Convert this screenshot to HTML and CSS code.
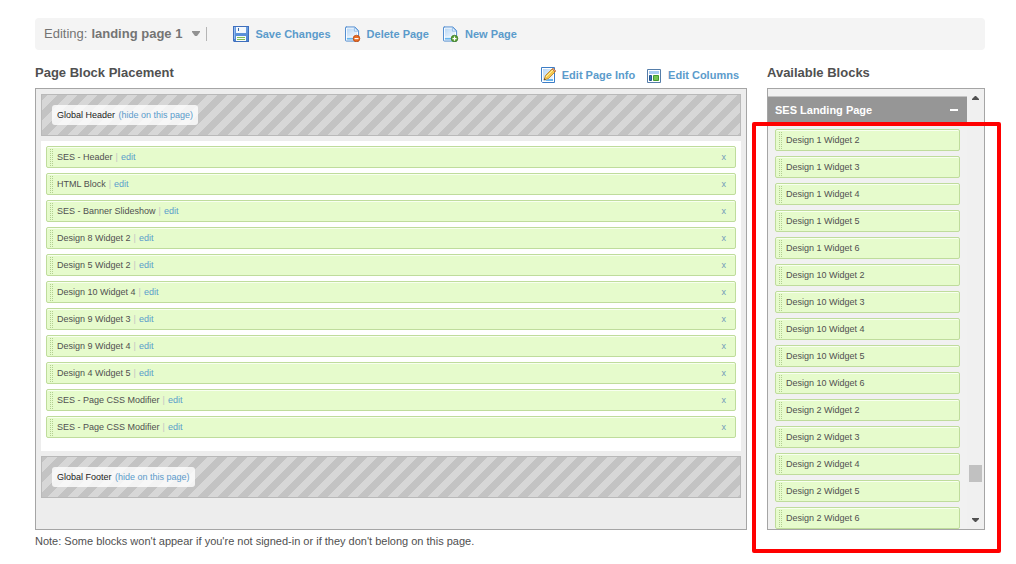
FILE: index.html
```html
<!DOCTYPE html>
<html lang="en">
<head>
<meta charset="utf-8">
<title>Page editor</title>
<link rel="stylesheet" href="styles.css">
</head>
<body>
<svg class="defs" aria-hidden="true">
  <defs>
    <linearGradient id="sheet" x1="0" y1="0" x2="1" y2="1"><stop offset="0" stop-color="#b9d8f6"/><stop offset="1" stop-color="#f2f8fe"/></linearGradient>
    <linearGradient id="disk" x1="0" y1="0" x2="0" y2="1"><stop offset="0" stop-color="#6b9fe0"/><stop offset="1" stop-color="#4a82d2"/></linearGradient>
    <symbol id="page" viewBox="0 0 16 16">
      <path d="M1 .5h9.500l4 4v11H1.500q-1 0-1-1V1.500q0-1 1-1z" fill="#fff" stroke="#4384cd"/>
      <path d="M2 2h8v3h3v6H2z" fill="url(#sheet)"/>
      <path d="M10 1v4h4z" fill="#e4f0fc" stroke="#6da5df" stroke-width=".7"/>
      <path d="M2 12h9v2H2z" fill="#68b5ee"/>
    </symbol>
  </defs>
</svg>
<header class="toolbar">
  <button class="page-picker" type="button">Editing: <strong>landing page 1</strong><svg class="caret" viewBox="0 0 8 6"><path d="M0 0h8v1L5 5H3L0 1z" fill="#929292"/></svg></button>
  <nav class="actions">
    <a class="action" href="#"><svg class="icon" viewBox="0 0 16 16"><path d="M0 0h16v16H1l-1-1z" fill="#3f6fbd"/><path d="M1 1h14v14H1z" fill="url(#disk)"/><path d="M3 1h10v6H3z" fill="#f3f8fd"/><path d="M5 2h1v3H5z" fill="#3b68aa"/><path d="M1 1h1v12H1z" fill="#91baf0"/><path d="M3 10h10v5H3z" fill="#f9fcf5"/><path d="M4 11h8v1H4zM4 13h8v1H4z" fill="#7cbd58"/></svg>Save Changes</a>
    <a class="action" href="#"><svg class="icon" viewBox="0 0 16 16"><use href="#page" width="15" height="16"/><circle cx="11.500" cy="12.500" r="3.300" fill="#e66a22" stroke="#b8430c" stroke-width=".7"/><path d="M9.500 12h4v1.200h-4z" fill="#fff"/></svg>Delete Page</a>
    <a class="action" href="#"><svg class="icon" viewBox="0 0 16 16"><use href="#page" width="15" height="16"/><circle cx="11.500" cy="12.500" r="3.300" fill="#5c9f34" stroke="#34751d" stroke-width=".7"/><path d="M9.500 12h1.400v-1.500h1.200V12h1.400v1.200h-1.400v1.500h-1.200v-1.500H9.500z" fill="#fff"/></svg>New Page</a>
  </nav>
</header>
<main class="workspace">
  <section class="placement">
    <div class="section-head">
      <h2 class="title">Page Block Placement</h2>
      <nav class="tools">
        <a class="action" href="#"><svg class="icon" viewBox="0 0 16 16"><path d="M.5.500h13v15H1.500l-1-1z" fill="#fff" stroke="#3c7dc6"/><path d="M2 2h10v12H2z" fill="url(#sheet)"/><path d="M7 12h5v2H4z" fill="#68b5ee"/><path d="M3 13l1.500-4.500L11 2l3 3-6.500 6.500z" fill="#f4c94f" stroke="#b27a26" stroke-width=".8"/><path d="M5 10l7-7" stroke="#fff0a0"/><path d="M11 2l1-1 3 3-1 1z" fill="#e9a26c" stroke="#a85a30" stroke-width=".5"/><path d="M3 13l.6-1.800L4.800 12.400z" fill="#333"/></svg>Edit Page Info</a>
        <a class="action" href="#"><svg class="icon" viewBox="0 0 16 16"><path d="M.5 2.500h13v13H.500z" fill="#fff" stroke="#557da9"/><path d="M2 4h10v3H2z" fill="#a9cdf3"/><path d="M2.500 8.500h2v5h-2z" fill="#3973b5" stroke="#235691"/><path d="M6.500 8.500h5v5h-5z" fill="#75c552" stroke="#439a34"/></svg>Edit Columns</a>
      </nav>
    </div>
    <div class="canvas">
      <div class="global"><span class="tag">Global Header <a href="#">(hide on this page)</a></span></div>
      <ul class="blocks column">
        <li class="block">SES - Header<i>|</i><a href="#">edit</a><button type="button" aria-label="Remove">x</button></li>
        <li class="block">HTML Block<i>|</i><a href="#">edit</a><button type="button" aria-label="Remove">x</button></li>
        <li class="block">SES - Banner Slideshow<i>|</i><a href="#">edit</a><button type="button" aria-label="Remove">x</button></li>
        <li class="block">Design 8 Widget 2<i>|</i><a href="#">edit</a><button type="button" aria-label="Remove">x</button></li>
        <li class="block">Design 5 Widget 2<i>|</i><a href="#">edit</a><button type="button" aria-label="Remove">x</button></li>
        <li class="block">Design 10 Widget 4<i>|</i><a href="#">edit</a><button type="button" aria-label="Remove">x</button></li>
        <li class="block">Design 9 Widget 3<i>|</i><a href="#">edit</a><button type="button" aria-label="Remove">x</button></li>
        <li class="block">Design 9 Widget 4<i>|</i><a href="#">edit</a><button type="button" aria-label="Remove">x</button></li>
        <li class="block">Design 4 Widget 5<i>|</i><a href="#">edit</a><button type="button" aria-label="Remove">x</button></li>
        <li class="block">SES - Page CSS Modifier<i>|</i><a href="#">edit</a><button type="button" aria-label="Remove">x</button></li>
        <li class="block">SES - Page CSS Modifier<i>|</i><a href="#">edit</a><button type="button" aria-label="Remove">x</button></li>
      </ul>
      <div class="global"><span class="tag">Global Footer <a href="#">(hide on this page)</a></span></div>
    </div>
    <p class="note">Note: Some blocks won't appear if you're not signed-in or if they don't belong on this page.</p>
  </section>
  <aside class="available">
    <div class="section-head"><h2 class="title">Available Blocks</h2></div>
    <div class="palette">
      <div class="palette-list">
        <button class="group" type="button">SES Landing Page<span class="minus"></span></button>
        <ul class="blocks">
          <li class="block">Design 1 Widget 2</li>
          <li class="block">Design 1 Widget 3</li>
          <li class="block">Design 1 Widget 4</li>
          <li class="block">Design 1 Widget 5</li>
          <li class="block">Design 1 Widget 6</li>
          <li class="block">Design 10 Widget 2</li>
          <li class="block">Design 10 Widget 3</li>
          <li class="block">Design 10 Widget 4</li>
          <li class="block">Design 10 Widget 5</li>
          <li class="block">Design 10 Widget 6</li>
          <li class="block">Design 2 Widget 2</li>
          <li class="block">Design 2 Widget 3</li>
          <li class="block">Design 2 Widget 4</li>
          <li class="block">Design 2 Widget 5</li>
          <li class="block">Design 2 Widget 6</li>
        </ul>
      </div>
      <div class="scrollbar">
        <svg class="arrow" viewBox="0 0 7 4"><path d="M3 0h1l3 3v1H0V3z" fill="#505050"/></svg>
        <span class="thumb"></span>
        <svg class="arrow" viewBox="0 0 7 4"><path d="M0 0h7v1L4 4H3L0 1z" fill="#505050"/></svg>
      </div>
    </div>
    <div class="highlight"></div>
  </aside>
</main>
</body>
</html>
```

FILE: styles.css
```css
* { box-sizing: border-box; }
body {
  min-height: 100vh;
  margin: 0;
  padding: 18px 31px 12px 35px;
  background: #fff;
  color: #505050;
  font-family: "Liberation Sans", Arial, sans-serif;
  font-size: 9px;
}
a { color: #5b9bcb; text-decoration: none; }
button { border: 0; padding: 0; background: none; font: inherit; color: inherit; cursor: pointer; }
ul { list-style: none; margin: 0; padding: 0; }
.defs { position: absolute; width: 0; height: 0; }

.toolbar {
  display: flex;
  align-items: center;
  height: 32px;
  padding-left: 9px;
  background: #f4f4f4;
  border-radius: 4px;
}
.page-picker {
  display: flex;
  align-items: center;
  gap: 4px;
  padding-right: 6px;
  border-right: 1px solid #b5b5b5;
  color: #747474;
  font-size: 13px;
  line-height: 14px;
}
.caret { width: 8px; height: 6px; margin-left: 6px; }
.actions { display: flex; gap: 14px; margin-left: 26px; }
.action {
  display: flex;
  align-items: center;
  gap: 6px;
  font-size: 11px;
  font-weight: bold;
  line-height: 16px;
}
.icon { width: 16px; height: 16px; flex: none; }

.workspace { display: grid; grid-template-columns: 1fr 218px; gap: 20px; }
.section-head {
  display: flex;
  align-items: flex-start;
  justify-content: space-between;
  height: 38px;
  padding-top: 15px;
}
.title { margin: 0; font-size: 13px; line-height: 16px; }
.tools { display: flex; gap: 12px; padding: 2px 8px 0 0; }
.tools .action { gap: 5px; }

.canvas {
  display: flex;
  flex-direction: column;
  gap: 5px;
  padding: 5px 5px 31px;
  border: 1px solid #a5a5a5;
  background: #ededed;
}
.global {
  height: 42px;
  padding: 10px;
  border: 1px solid #b9b9b9;
  background: linear-gradient(135deg, #d7d7d7 25%, #c3c3c3 25% 50%, #d7d7d7 50% 75%, #c3c3c3 75%) 6px 0 / 20px 20px;
}
.tag {
  display: inline-block;
  padding: 0 5px;
  border-radius: 3px;
  background: rgba(255, 255, 255, .8);
  color: #222;
  line-height: 20px;
}
.tag a { margin-left: 1px; }
.column { padding: 5px 5px 13px; background: #fff; }
.blocks { display: flex; flex-direction: column; gap: 5px; }
.block {
  display: flex;
  align-items: center;
  height: 22px;
  padding: 0 9px 0 3px;
  border: 1px solid #bfdc9c;
  border-radius: 2px;
  background: #e6fbcc;
  box-shadow: inset 0 1px #f8fff0;
}
.block::before {
  content: "";
  width: 3px;
  height: 17px;
  margin-right: 4px;
  background: conic-gradient(from 270deg, #a9c986 25%, transparent 0) 0 0 / 2px 2px;
  background: linear-gradient(#e6fbcc, #e6fbcc) 1px 0 / 1px 100% no-repeat, repeating-linear-gradient(#b2cf91 0 1px, #e6fbcc 1px 2px);
}
.block i { margin: 0 3px; color: #c5c5c5; font-style: normal; }
.block button { margin-left: auto; color: #7199b9; }
.note { margin: 4px 0 0; font-size: 11px; line-height: 14px; }

.available { position: relative; }
.palette {
  display: flex;
  height: 442px;
  border: 1px solid #a5a5a5;
  background: #f1f1f1;
  overflow: hidden;
}
.palette-list { flex: 1; padding-top: 7px; }
.group {
  display: flex;
  align-items: center;
  justify-content: space-between;
  width: 100%;
  height: 26px;
  padding: 0 9px 0 7px;
  border-top: 1px solid #c4c4c4;
  background: #969696;
  color: #fff;
  font-size: 11px;
  font-weight: bold;
}
.minus { width: 8px; height: 2px; background: #fff; }
.palette-list .blocks { padding: 7px 7px 0; }
.scrollbar {
  display: flex;
  flex-direction: column;
  align-items: center;
  width: 17px;
  padding: 7px 0;
  background: #f0f0f0;
}
.arrow { width: 7px; height: 4px; }
.thumb { width: 13px; height: 17px; margin: auto 0 36px; background: #c1c1c1; }
.highlight {
  position: absolute;
  top: 72px;
  left: -15px;
  right: -16px;
  height: 431px;
  border: 4px solid #f00;
  border-radius: 2px;
  pointer-events: none;
}
```
